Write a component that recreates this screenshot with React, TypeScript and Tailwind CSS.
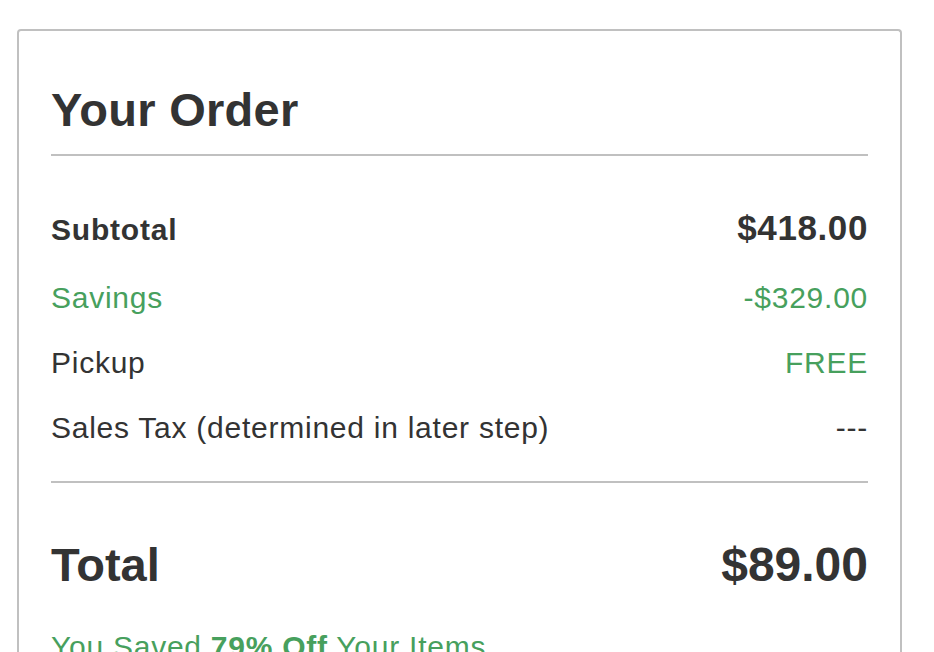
export default function App() {
  const rows = [
    { label: 'Savings', value: '-$329.00', labelCls: 'text-[#47a05d]', valueCls: 'text-[#47a05d]' },
    { label: 'Pickup', value: 'FREE', labelCls: 'text-[#333]', valueCls: 'text-[#47a05d]' },
    { label: 'Sales Tax (determined in later step)', value: '---', labelCls: 'text-[#333]', valueCls: 'text-[#333]' },
  ];

  return (
    <div className="min-h-screen bg-white px-[17px] pt-[29px] font-['Liberation_Sans',Arial,sans-serif] text-[#333]">
      <div className="w-[885px] rounded-[4px] border-2 border-b-0 border-[#c0c0c0] px-[32px] pt-[55px] pb-8">
        {/* Header */}
        <h1 className="text-[47px] font-bold leading-none tracking-[0.3px]">Your Order</h1>
        <div className="mt-[21px] h-[2px] bg-[#c0c0c0]" />

        {/* Line items */}
        <div className="mt-[39px] mb-[3px] flex items-baseline justify-between leading-[65px]">
          <span className="text-[30px] font-bold tracking-[0.8px]">Subtotal</span>
          <span className="text-[35px] font-bold tracking-[0.6px]">$418.00</span>
        </div>
        {rows.map((r) => (
          <div key={r.label} className="flex items-baseline justify-between text-[30px] leading-[65px] tracking-[0.75px]">
            <span className={r.labelCls}>{r.label}</span>
            <span className={r.valueCls}>{r.value}</span>
          </div>
        ))}

        <div className="mt-[21px] h-[2px] bg-[#c0c0c0]" />

        {/* Total */}
        <div className="mt-[58px] flex items-baseline justify-between font-bold leading-none">
          <span className="text-[47px]">Total</span>
          <span className="text-[48px]">$89.00</span>
        </div>

        <p className="mt-[43px] text-[30px] leading-none tracking-[0.75px] text-[#47a05d]">
          You Saved <strong className="font-bold">79% Off</strong> Your Items
        </p>
      </div>
    </div>
  );
}
